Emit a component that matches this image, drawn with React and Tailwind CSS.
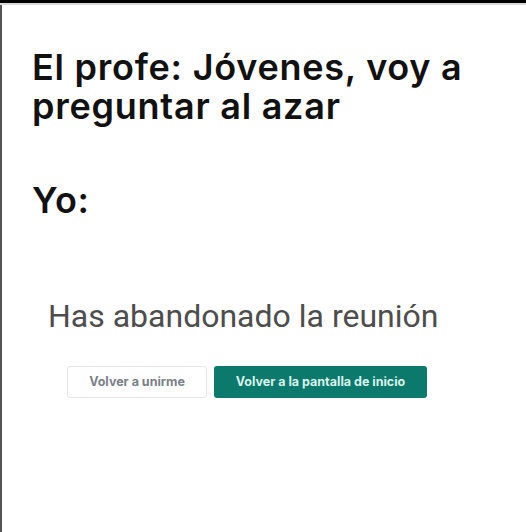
export default function App() {
  return (
    <div className="w-[526px] h-[532px] bg-white overflow-hidden flex flex-col">
      <div className="h-[3px] bg-black shrink-0" />
      <div className="h-[2px] bg-[#d9d9d9] shrink-0" />
      <div className="flex-1 border-l-2 border-[#555] flex flex-col">
        <div
          className="pl-[30px] pt-[43px] text-[36px] leading-[39px] font-semibold tracking-[0.75px] text-[#111]"
          style={{ fontFamily: "Inter, 'Liberation Sans', sans-serif" }}
        >
          <div>El profe: Jóvenes, voy a</div>
          <div>preguntar al azar</div>
          <div className="mt-[55px]">Yo:</div>
        </div>
        <div
          className="pl-[46px] mt-[77px] text-[32px] leading-[38px] text-[#4d4d4d]"
          style={{ fontFamily: "Roboto, 'Liberation Sans', sans-serif" }}
        >
          Has abandonado la reunión
        </div>
        <div className="flex gap-[7px] pl-[65px] mt-[31px]">
          <div className="w-[140px] h-[32px] border border-[#e6e6e6] rounded-[3px] flex items-center justify-center text-[12.5px] font-bold text-[#7a8089]"
            style={{ fontFamily: "Inter, 'Liberation Sans', sans-serif" }}>
            Volver a unirme
          </div>
          <div className="w-[213px] h-[32px] bg-[#0b7a6c] rounded-[3px] flex items-center justify-center text-[12.5px] font-bold text-[#d9f2ec]"
            style={{ fontFamily: "Inter, 'Liberation Sans', sans-serif" }}>
            Volver a la pantalla de inicio
          </div>
        </div>
      </div>
    </div>
  );
}
